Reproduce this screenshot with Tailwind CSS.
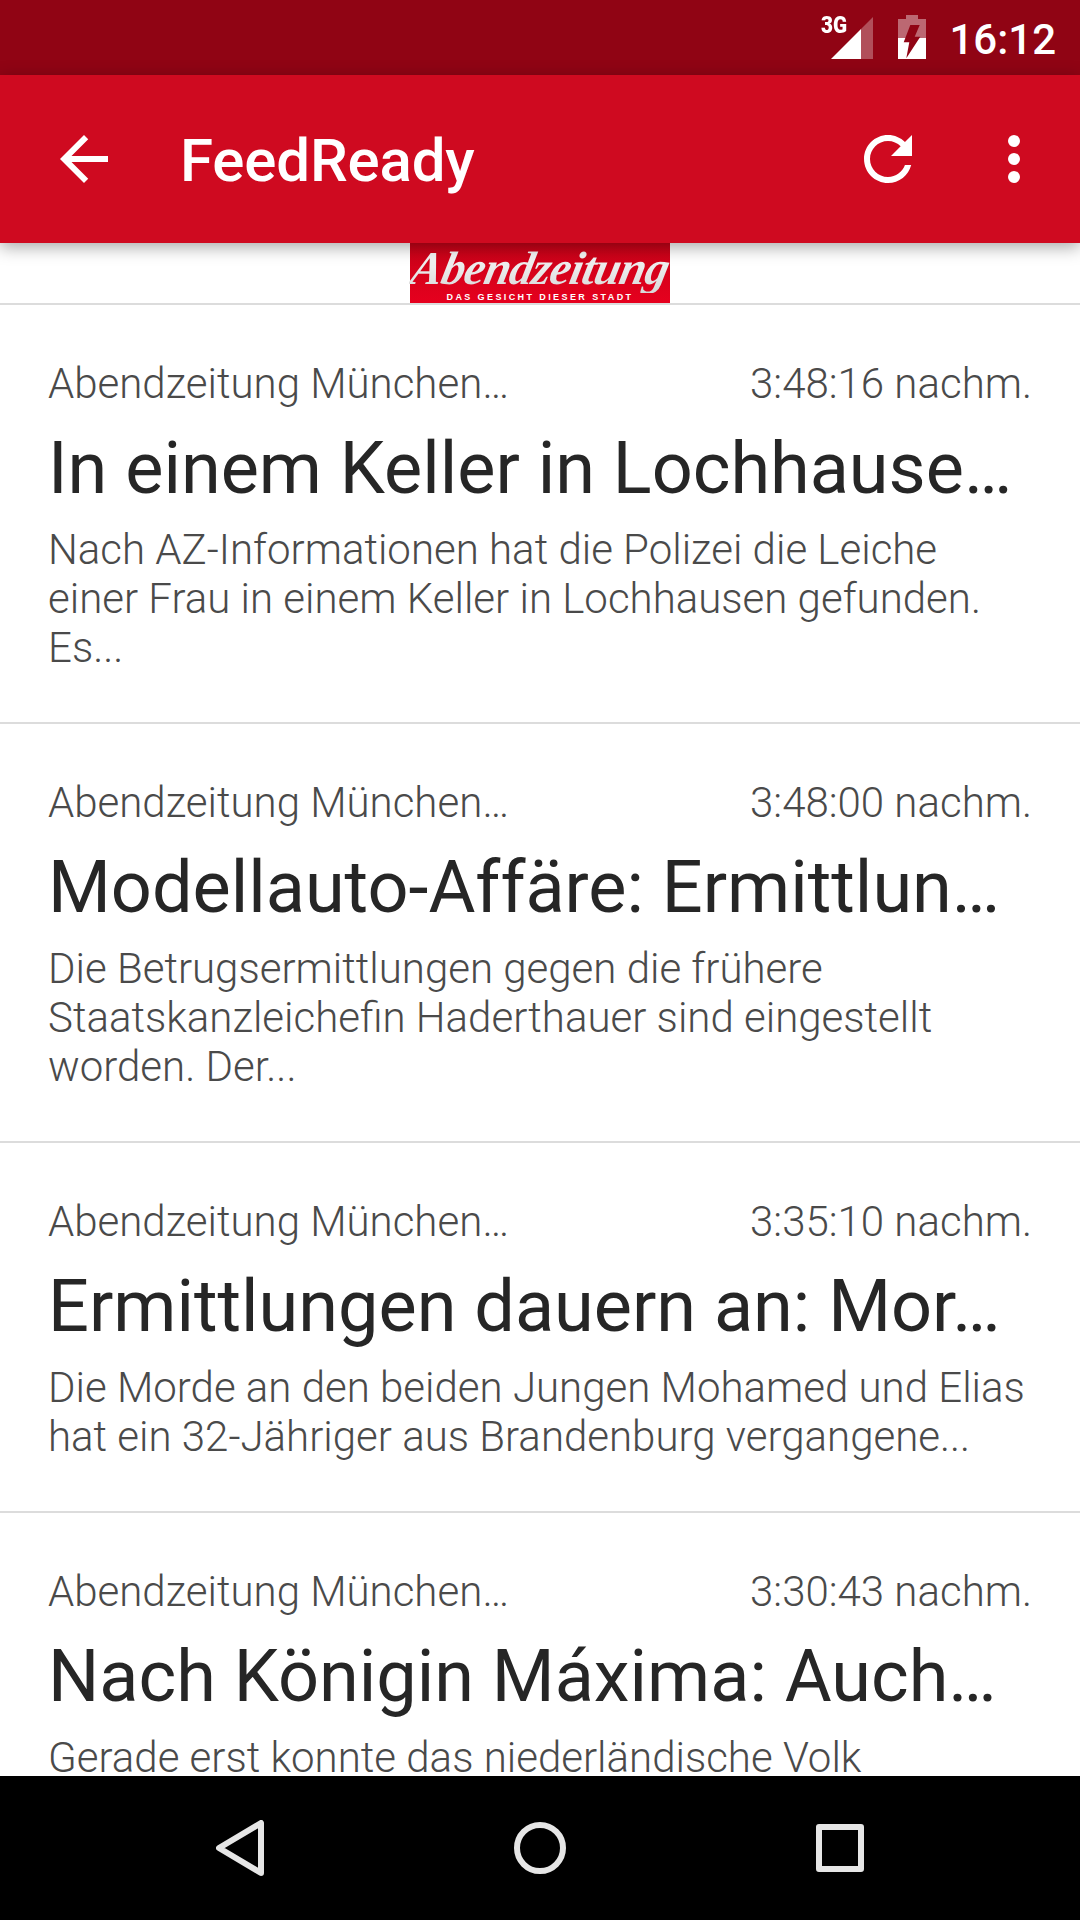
<!DOCTYPE html>
<html lang="de">

<head>
    <meta charset="UTF-8">
    <meta name="viewport" content="width=device-width, initial-scale=1.0">
    <title>FeedReady</title>
    <script src="https://cdn.jsdelivr.net/npm/@tailwindcss/browser@4"></script>
</head>

<body class="bg-white font-['Roboto',sans-serif]">
    <div class="flex flex-col w-[1080px] h-[1920px] overflow-hidden">
        <!-- Status bar -->
        <div class="h-[75px] shrink-0 bg-[#900414] flex items-start justify-end pr-[24px] text-white">
            <div class="relative w-[42px] h-[42px] mt-[17px] mr-[25px]">
                <span class="absolute left-[-10px] top-[-3px] origin-left scale-x-90 text-[23px] leading-[24px] font-black">3G</span>
                <svg viewBox="0 0 42 42" class="w-[42px] h-[42px]">
                    <path d="M42 0V42H30V12Z" fill="#ffffff" fill-opacity="0.3"/>
                    <path d="M30 12V42H0Z" fill="#ffffff"/>
                </svg>
            </div>
            <svg viewBox="0 0 28 44" class="w-[28px] h-[44px] mt-[15px] mr-[23px]">
                <path d="M8 0H20V4H28V44H0V4H8Z" fill="#ffffff" fill-opacity="0.4"/>
                <path d="M0 23H28V44H0Z" fill="#ffffff"/>
                <path d="M12.3 10H21.7L16.7 21.7H22.3L8.3 43.3L11.3 27.3H5.7Z" fill="#900414"/>
            </svg>
            <span class="mt-[15px] text-[42px] leading-[50px] font-medium">16:12</span>
        </div>

        <!-- Toolbar -->
        <header class="relative z-10 h-[168px] shrink-0 bg-[#cf0a20] flex items-center text-white shadow-[0_4px_16px_rgba(0,0,0,0.35)]">
            <svg viewBox="8 8 32 32" class="w-[48px] h-[48px] ml-[60px]" fill="#ffffff">
                <path d="M40 22H15.66l11.17-11.17L24 8 8 24l16 16 2.83-2.83L15.66 26H40v-4z"/>
            </svg>
            <h1 class="ml-[72px] mt-[4px] text-[60px] leading-[70px] font-medium tracking-[-0.15px]">FeedReady</h1>
            <svg viewBox="8 8 32 32" class="ml-auto w-[48px] h-[48px]" fill="#ffffff">
                <path d="M35.3 12.7C32.41 9.8 28.42 8 24 8 15.16 8 8.02 15.16 8.02 24S15.16 40 24 40c7.45 0 13.69-5.1 15.46-12H35.3c-1.65 4.66-6.07 8-11.3 8-6.63 0-12-5.37-12-12s5.37-12 12-12c3.31 0 6.28 1.38 8.45 3.55L26 22h14V8l-4.7 4.7z"/>
            </svg>
            <div class="ml-[96px] mr-[60px] flex flex-col gap-[6px]">
                <div class="w-[12px] h-[12px] rounded-full bg-white"></div>
                <div class="w-[12px] h-[12px] rounded-full bg-white"></div>
                <div class="w-[12px] h-[12px] rounded-full bg-white"></div>
            </div>
        </header>

        <!-- Feed -->
        <main class="flex-1 min-h-0 overflow-hidden">
            <div class="h-[62px] border-b-2 border-[#dcdcdc] flex justify-center">
                <div class="w-[260px] h-[60px] bg-gradient-to-b from-[#c80318] to-[#e6001e] flex flex-col items-center">
                    <span class="block h-[50px] text-[47px] leading-[50px] font-bold italic font-['Liberation_Serif',serif] -skew-x-12 tracking-[-0.8px] bg-gradient-to-b from-white to-[#d8d8d8] bg-clip-text text-transparent">Abendzeitung</span>
                    <span class="text-[9px] leading-[8px] font-bold tracking-[2.4px] text-white font-['Liberation_Sans',sans-serif]">DAS GESICHT DIESER STADT</span>
                </div>
            </div>

            <article class="border-b-2 border-[#dcdcdc] px-[48px] pt-[54px] pb-[50px]">
                <div class="flex justify-between text-[42px] leading-[49px] font-light text-[#4a4a4a]">
                    <span>Abendzeitung München…</span>
                    <span>3:48:16 nachm.</span>
                </div>
                <h2 class="mt-[19px] text-[72px] leading-[84px] text-[#262626] whitespace-nowrap">In einem Keller in Lochhause…</h2>
                <p class="mt-[14px] text-[42px] leading-[49px] font-light text-[#4a4a4a]">Nach AZ-Informationen hat die Polizei die Leiche<br>einer Frau in einem Keller in Lochhausen gefunden.<br>Es...</p>
            </article>

            <article class="border-b-2 border-[#dcdcdc] px-[48px] pt-[54px] pb-[50px]">
                <div class="flex justify-between text-[42px] leading-[49px] font-light text-[#4a4a4a]">
                    <span>Abendzeitung München…</span>
                    <span>3:48:00 nachm.</span>
                </div>
                <h2 class="mt-[19px] text-[72px] leading-[84px] text-[#262626] whitespace-nowrap">Modellauto-Affäre: Ermittlun…</h2>
                <p class="mt-[14px] text-[42px] leading-[49px] font-light text-[#4a4a4a]">Die Betrugsermittlungen gegen die frühere<br>Staatskanzleichefin Haderthauer sind eingestellt<br>worden. Der...</p>
            </article>

            <article class="border-b-2 border-[#dcdcdc] px-[48px] pt-[54px] pb-[50px]">
                <div class="flex justify-between text-[42px] leading-[49px] font-light text-[#4a4a4a]">
                    <span>Abendzeitung München…</span>
                    <span>3:35:10 nachm.</span>
                </div>
                <h2 class="mt-[19px] text-[72px] leading-[84px] text-[#262626] whitespace-nowrap">Ermittlungen dauern an: Mor…</h2>
                <p class="mt-[14px] text-[42px] leading-[49px] font-light text-[#4a4a4a]">Die Morde an den beiden Jungen Mohamed und Elias<br>hat ein 32-Jähriger aus Brandenburg vergangene...</p>
            </article>

            <article class="px-[48px] pt-[54px]">
                <div class="flex justify-between text-[42px] leading-[49px] font-light text-[#4a4a4a]">
                    <span>Abendzeitung München…</span>
                    <span>3:30:43 nachm.</span>
                </div>
                <h2 class="mt-[19px] text-[72px] leading-[84px] text-[#262626] whitespace-nowrap">Nach Königin Máxima: Auch…</h2>
                <p class="mt-[14px] text-[42px] leading-[49px] font-light text-[#4a4a4a]">Gerade erst konnte das niederländische Volk</p>
            </article>
        </main>

        <!-- Navigation bar -->
        <nav class="h-[144px] shrink-0 bg-black flex items-center pl-[216px] gap-[250px]">
            <svg viewBox="0 0 48 56" class="w-[48px] h-[56px]" fill="none" stroke="#e6e6e6" stroke-width="6" stroke-linejoin="round">
                <path d="M45 3V53L3 28Z"/>
            </svg>
            <div class="w-[52px] h-[52px] rounded-full border-[6px] border-[#e6e6e6]"></div>
            <div class="w-[48px] h-[48px] rounded-[3px] border-[6px] border-[#e6e6e6]"></div>
        </nav>
    </div>
</body>

</html>
